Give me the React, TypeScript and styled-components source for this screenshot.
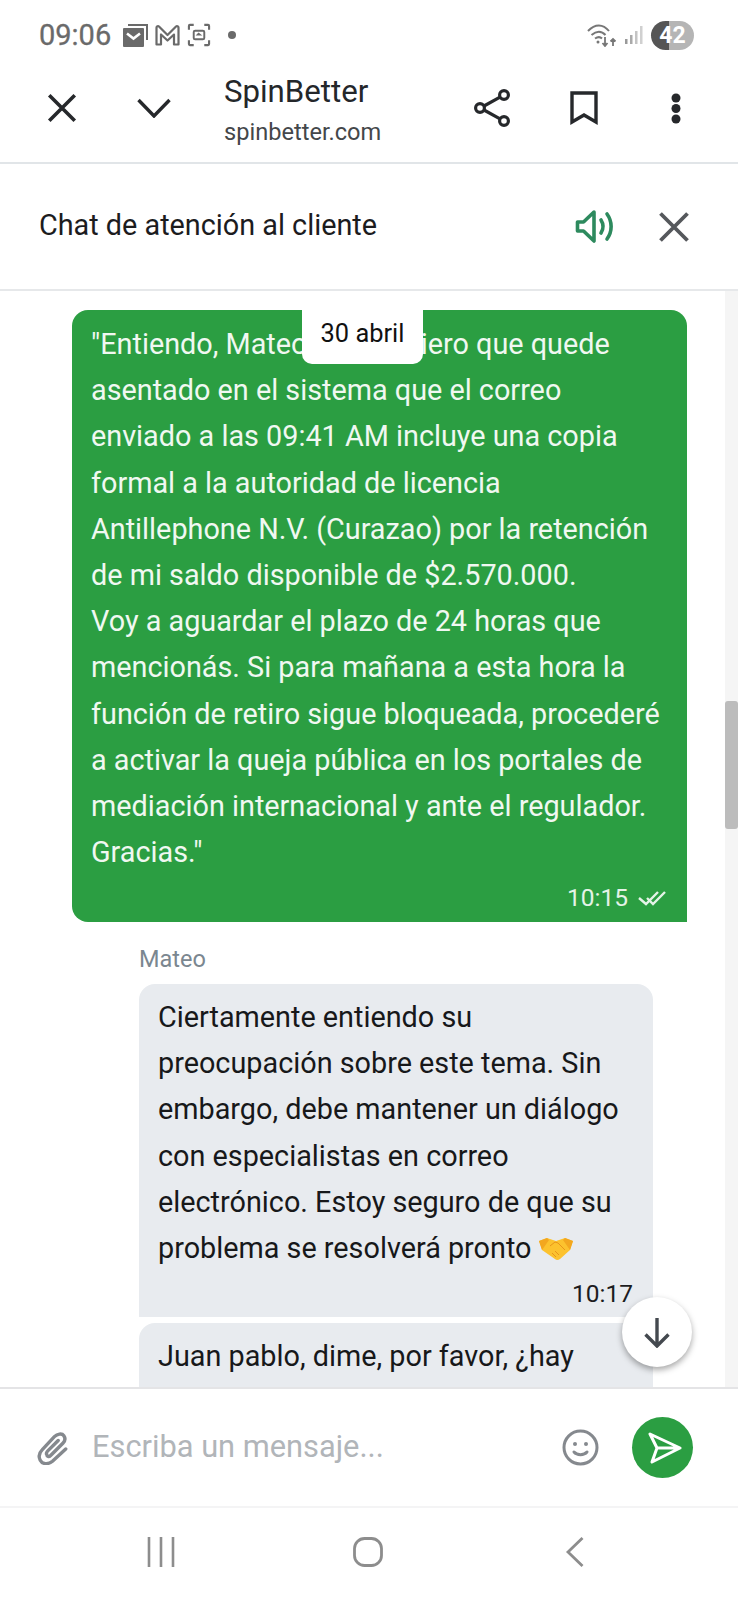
import React from "react";
import styled, { createGlobalStyle } from "styled-components";

const Global = createGlobalStyle`
  html, body { margin: 0; padding: 0; background: #fff; }
  * { box-sizing: border-box; }
  body { font-family: Roboto, "Liberation Sans", sans-serif; }
`;

const Page = styled.div`
  width: 738px;
  height: 1600px;
  display: flex;
  flex-direction: column;
  background: #fff;
  overflow: hidden;
`;

const StatusBar = styled.div`
  height: 60px;
  padding: 10px 44px 0 39px;
  display: flex;
  align-items: center;
  justify-content: space-between;
  color: #6a6a6a;
`;
const StatusGroup = styled.div<{ $gap: number }>`
  display: flex;
  align-items: center;
  gap: ${(p) => p.$gap}px;
`;
const Clock = styled.span`
  font-size: 29px;
  font-weight: 400;
  margin-right: 5px;
  -webkit-text-stroke: 0.3px #6a6a6a;
`;
const Dot = styled.span`
  width: 8px;
  height: 8px;
  border-radius: 50%;
  background: #6a6a6a;
  margin-left: 10px;
`;
const Battery = styled.span`
  width: 43px;
  height: 29px;
  border-radius: 15px;
  background: linear-gradient(90deg, #555 0 42%, #b5b5b5 42% 100%);
  color: #fff;
  font-size: 23px;
  font-weight: 700;
  display: flex;
  align-items: center;
  justify-content: center;
`;

const BrowserBar = styled.div`
  height: 104px;
  border-bottom: 2px solid #e1e5e8;
  display: grid;
  grid-template-columns: 124px 60px 1fr 92px 92px 92px;
  padding: 0 16px 6px 0;
  align-items: center;
  justify-items: center;
`;
const BarIcon = styled.svg`
  display: block;
`;
const TitleBlock = styled.div`
  justify-self: start;
  padding: 2px 0 0 40px;
  display: flex;
  flex-direction: column;
  gap: 8px;
`;
const SiteName = styled.div`
  font-size: 31.2px;
  line-height: 37px;
  color: #24272a;
`;
const SiteDomain = styled.div`
  font-size: 23.6px;
  line-height: 28px;
  color: #44474a;
`;

const ChatHeader = styled.div`
  height: 127px;
  border-bottom: 2px solid #e6e8ea;
  padding: 0 46px 0 39px;
  display: flex;
  align-items: center;
`;
const ChatTitle = styled.div`
  flex: 1;
  padding-bottom: 4px;
  font-size: 28.8px;
  color: #1c1c1e;
`;
const ChatActions = styled.div`
  display: flex;
  align-items: center;
  gap: 41px;
`;

const ChatBody = styled.div`
  height: 1096px;
  flex-shrink: 0;
  display: flex;
  position: relative;
  overflow: hidden;
`;
const Messages = styled.div`
  flex: 1;
  padding-top: 19px;
  display: flex;
  flex-direction: column;
`;
const Rail = styled.div`
  width: 13px;
  background: #f5f5f5;
  padding-top: 410px;
`;
const Thumb = styled.div`
  height: 128px;
  background: #bcbcbc;
  border-radius: 3px;
`;

const OutBubble = styled.div`
  width: 615px;
  margin-left: 72px;
  height: 612px;
  flex-shrink: 0;
  background: #2b9e42;
  border-radius: 16px 16px 0 16px;
  color: #f0f8f1;
  padding: 11px 21px 0 19px;
  font-size: 28.8px;
  line-height: 46.2px;
  white-space: pre-line;
`;
const Stamp = styled.div<{ $light?: boolean }>`
  display: flex;
  justify-content: flex-end;
  align-items: center;
  gap: 10px;
  font-size: 24.5px;
  line-height: 28px;
  margin-top: 9px;
  color: ${(p) => (p.$light ? "#e4f3e7" : "#1c1c1e")};
`;
const Sender = styled.div`
  margin: 24px 0 0 139px;
  font-size: 23.5px;
  line-height: 27px;
  color: #7b8790;
  flex-shrink: 0;
`;
const InBubble = styled.div<{ $last?: boolean }>`
  width: 514px;
  margin: ${(p) => (p.$last ? "6px" : "11px")} 0 0 139px;
  height: ${(p) => (p.$last ? "100px" : "333px")};
  flex-shrink: 0;
  background: #e8ebef;
  border-radius: 16px 16px 0 0;
  color: #17181a;
  padding: 10px 20px 0 19px;
  font-size: 28.8px;
  line-height: 46.2px;
  white-space: pre-line;
`;
const HandshakeIcon = styled.svg`
  display: inline-block;
  vertical-align: -2px;
`;
const DateChip = styled.div`
  position: absolute;
  top: 0;
  left: 302px;
  width: 121px;
  height: 73px;
  background: #fff;
  border-radius: 10px;
  color: #111;
  font-size: 25.4px;
  display: flex;
  align-items: center;
  justify-content: center;
  padding-top: 11px;
`;
const ScrollDown = styled.div`
  position: absolute;
  left: 622px;
  top: 1006px;
  width: 70px;
  height: 70px;
  border-radius: 50%;
  background: #fff;
  box-shadow: 0 3px 6px rgba(0, 0, 0, 0.35);
  display: flex;
  align-items: center;
  justify-content: center;
`;

const Composer = styled.div`
  height: 121px;
  flex-shrink: 0;
  border-top: 2px solid #e4e4e6;
  border-bottom: 2px solid #f4f4f5;
  padding: 0 45px 0 37px;
  display: flex;
  align-items: center;
`;
const Placeholder = styled.div`
  flex: 1;
  padding: 0 0 2px 24px;
  font-size: 30.8px;
  color: #b1b5b9;
`;
const SendButton = styled.div`
  width: 61px;
  height: 61px;
  border-radius: 50%;
  background: #2b9e42;
  margin-left: 33px;
  padding-left: 4px;
  display: flex;
  align-items: center;
  justify-content: center;
`;
const NavBar = styled.div`
  flex: 1;
  display: grid;
  grid-template-columns: repeat(3, 206.5px);
  padding: 0 0 4px 58px;
  align-items: center;
  justify-items: center;
`;

const Close = ({ size = 34, color = "#26282b" }: { size?: number; color?: string }) => (
  <BarIcon width={size} height={size} viewBox="0 0 32 32" fill="none" stroke={color} strokeWidth="3.4">
    <path d="M4 4 L28 28 M28 4 L4 28" />
  </BarIcon>
);

export default function App() {
  return (
    <Page>
      <Global />
      <StatusBar>
        <StatusGroup $gap={7}>
          <Clock>09:06</Clock>
          <BarIcon width="25" height="23" viewBox="0 0 25 23">
            <path d="M5 0h20v16h-2V2H5z" fill="#6a6a6a" />
            <rect x="0" y="4" width="21" height="19" rx="1" fill="#6a6a6a" />
            <path d="M4 9.500l6.500 5 6.500-5" fill="none" stroke="#fff" strokeWidth="2.600" />
          </BarIcon>
          <BarIcon width="25" height="22" viewBox="0 0 25 22" fill="none" stroke="#6a6a6a" strokeWidth="2.200">
            <path d="M1.500 20.500V3.500a1.500 1.500 0 012.500-1L12.500 11 21 2.500a1.500 1.500 0 012.500 1v17h-4.500v-10l-6.500 6-6.500-6v10z" strokeLinejoin="round" />
          </BarIcon>
          <BarIcon width="24" height="24" viewBox="0 0 25 25" fill="none" stroke="#6a6a6a" strokeWidth="2.200">
            <path d="M2 7V3a1 1 0 011-1h4M18 2h4a1 1 0 011 1v4M23 18v4a1 1 0 01-1 1h-4M7 23H3a1 1 0 01-1-1v-4" />
            <rect x="7" y="8" width="11" height="9" rx="1.500" strokeWidth="2" />
            <path d="M9 13l3-3 4 3z" fill="#6a6a6a" stroke="none" />
          </BarIcon>
          <Dot />
        </StatusGroup>
        <StatusGroup $gap={8}>
          <BarIcon width="30" height="24" viewBox="0 0 30 24" fill="none" stroke="#777" strokeWidth="2">
            <path d="M1 8c7-7.500 15-7.500 21 0M4.500 12c5-4.500 10-4.500 14 0M8 15.500c3-2 5-2 7 0" />
            <circle cx="11" cy="19" r="1.500" fill="#777" stroke="none" />
            <path d="M18 14v9M15.500 20l2.500 3 2.500-3M26 23v-7M23.500 18.500L26 16l2.500 2.500" strokeWidth="1.800" />
          </BarIcon>
          <BarIcon width="18" height="18" viewBox="0 0 18 18">
            <rect x="0" y="13" width="2.500" height="5" fill="#999" />
            <rect x="5" y="9" width="2.500" height="9" fill="#aaa" />
            <rect x="10" y="5" width="2.500" height="13" fill="#c4c4c4" />
            <rect x="15" y="0" width="2.500" height="18" fill="#d0d0d0" />
          </BarIcon>
          <Battery>42</Battery>
        </StatusGroup>
      </StatusBar>

      <BrowserBar>
        <Close />
        <BarIcon width="34" height="20" viewBox="0 0 34 20" fill="none" stroke="#26282b" strokeWidth="3.400">
          <path d="M1.500 2L17 18 32.500 2" />
        </BarIcon>
        <TitleBlock>
          <SiteName>SpinBetter</SiteName>
          <SiteDomain>spinbetter.com</SiteDomain>
        </TitleBlock>
        <BarIcon width="36" height="38" viewBox="0 0 36 38" fill="none" stroke="#26282b" strokeWidth="3.200">
          <circle cx="30" cy="6" r="4.400" />
          <circle cx="6" cy="19" r="4.400" />
          <circle cx="30" cy="32" r="4.400" />
          <path d="M10 17L26 8.200M10 21L26 29.800" />
        </BarIcon>
        <BarIcon width="28" height="34" viewBox="0 0 28 34" fill="none" stroke="#26282b" strokeWidth="3.400">
          <path d="M2 2h24v29l-12-7-12 7z" />
        </BarIcon>
        <BarIcon width="10" height="31" viewBox="0 0 10 31" fill="#26282b">
          <circle cx="5" cy="5" r="4.500" />
          <circle cx="5" cy="15.500" r="4.500" />
          <circle cx="5" cy="26" r="4.500" />
        </BarIcon>
      </BrowserBar>

      <ChatHeader>
        <ChatTitle>Chat de atención al cliente</ChatTitle>
        <ChatActions>
          <BarIcon width="40" height="35" viewBox="0 0 40 35" fill="none" stroke="#2d8a5e" strokeWidth="3.600">
            <path d="M2.500 13v9h6l10.500 10V3L8.500 13z" strokeLinejoin="round" />
            <path d="M26 11c2.500 4 2.500 9 0 13M32 5c5.500 7.500 5.500 17.500 0 25" strokeLinecap="round" />
          </BarIcon>
          <Close size={36} color="#55585c" />
        </ChatActions>
      </ChatHeader>

      <ChatBody>
        <Messages>
          <OutBubble>
            {`"Entiendo, Mateo. Pero quiero que quede
asentado en el sistema que el correo
enviado a las 09:41 AM incluye una copia
formal a la autoridad de licencia
Antillephone N.V. (Curazao) por la retención
de mi saldo disponible de $2.570.000.
Voy a aguardar el plazo de 24 horas que
mencionás. Si para mañana a esta hora la
función de retiro sigue bloqueada, procederé
a activar la queja pública en los portales de
mediación internacional y ante el regulador.
Gracias."`}
            <Stamp $light>
              10:15
              <BarIcon width="28" height="16" viewBox="0 0 28 16" fill="none" stroke="#e4f3e7" strokeWidth="2.400">
                <path d="M1 8l7 6L20 2M9 8l6 6L27 2" />
              </BarIcon>
            </Stamp>
          </OutBubble>
          <Sender>Mateo</Sender>
          <InBubble>
            {`Ciertamente entiendo su
preocupación sobre este tema. Sin
embargo, debe mantener un diálogo
con especialistas en correo
electrónico. Estoy seguro de que su
problema se resolverá pronto `}
            <HandshakeIcon width="34" height="22" viewBox="0 0 34 22">
              <path d="M0 3l8-3 9 3 9-3 8 3-3 9-10 9c-2 1.500-4 1-5 0L3 12z" fill="#fcc22e" />
              <path d="M0 3l8-3 2 2-7 10zM34 3l-8-3-2 2 7 10z" fill="#f3a71f" />
              <path d="M11 8l5-4 3 1 7 7M13 15l4 4M16 13l4 4" fill="none" stroke="#e8951a" strokeWidth="1" />
            </HandshakeIcon>
            <Stamp>10:17</Stamp>
          </InBubble>
          <InBubble $last>Juan pablo, dime, por favor, ¿hay</InBubble>
        </Messages>
        <Rail>
          <Thumb />
        </Rail>
        <DateChip>30 abril</DateChip>
        <ScrollDown>
          <BarIcon width="28" height="31" viewBox="0 0 28 31" fill="none" stroke="#44494f" strokeWidth="3.400">
            <path d="M14 1v28M2.500 17.500L14 29l11.500-11.500" />
          </BarIcon>
        </ScrollDown>
      </ChatBody>

      <Composer>
        <BarIcon width="31" height="34" viewBox="0 0 32 36" fill="none" stroke="#85898e" strokeWidth="3.600">
          <path d="M30 19L16 32C11 36 5 35 3 31C1 27 2 23 5 20L18 6C21 3 26 2 28 5C30 8 29 11 27 13L14 26C12 28 10 27 10 25C9 24 10 22 11 21L22 10" strokeLinecap="round" />
        </BarIcon>
        <Placeholder>Escriba un mensaje...</Placeholder>
        <BarIcon width="37" height="37" viewBox="0 0 37 37" fill="none" stroke="#85898e" strokeWidth="3">
          <circle cx="18.500" cy="18.500" r="16.500" />
          <circle cx="13" cy="15" r="2" fill="#85898e" stroke="none" />
          <circle cx="24" cy="15" r="2" fill="#85898e" stroke="none" />
          <path d="M12 23c3 3.500 10 3.500 13 0" strokeLinecap="round" />
        </BarIcon>
        <SendButton>
          <BarIcon width="34" height="32" viewBox="0 0 34 32" fill="none" stroke="#fff" strokeWidth="3" strokeLinejoin="round">
            <path d="M2 2l30 14L4 30l5-14zM9 16h23" />
          </BarIcon>
        </SendButton>
      </Composer>

      <NavBar>
        <BarIcon width="28" height="30" viewBox="0 0 28 30" fill="none" stroke="#8d8d8d" strokeWidth="2.600">
          <path d="M2 0v30M14 0v30M26 0v30" />
        </BarIcon>
        <BarIcon width="30" height="30" viewBox="0 0 30 30" fill="none" stroke="#8d8d8d" strokeWidth="2.800">
          <rect x="1.500" y="1.500" width="27" height="27" rx="10" />
        </BarIcon>
        <BarIcon width="19" height="30" viewBox="0 0 19 30" fill="none" stroke="#8d8d8d" strokeWidth="2.800">
          <path d="M17.500 1L3 15l14.500 14" />
        </BarIcon>
      </NavBar>
    </Page>
  );
}
